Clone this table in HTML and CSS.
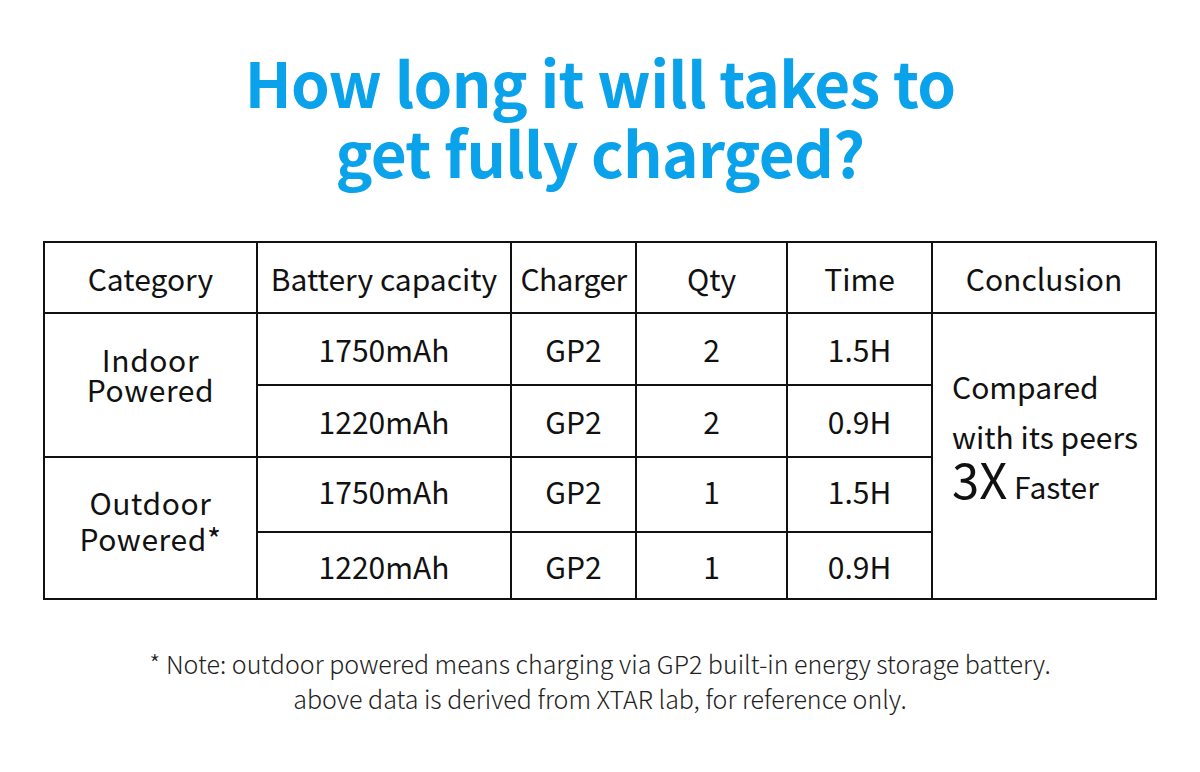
FILE: index.html
```html
<!DOCTYPE html>
<html>
<head>
<meta charset="utf-8">
<link rel="stylesheet" href="styles.css">
</head>
<body>
<div class="page">
  <h1 class="title">How long it will takes to<br>get fully charged?</h1>
  <table class="spec">
    <colgroup>
      <col class="c1"><col class="c2"><col class="c3"><col class="c4"><col class="c5"><col class="c6">
    </colgroup>
    <thead>
      <tr class="head"><th>Category</th><th>Battery capacity</th><th class="narrow">Charger</th><th>Qty</th><th>Time</th><th>Conclusion</th></tr>
    </thead>
    <tbody>
      <tr class="r1"><td rowspan="2" class="cat cat-in">Indoor<br>Powered</td><td>1750mAh</td><td>GP2</td><td>2</td><td>1.5H</td>
        <td rowspan="4" class="concl"><div class="concl-text">Compared<br>with its peers<br><span class="big">3X</span> Faster</div></td></tr>
      <tr class="r2"><td>1220mAh</td><td>GP2</td><td>2</td><td>0.9H</td></tr>
      <tr class="r3"><td rowspan="2" class="cat cat-out">Outdoor<br>Powered*</td><td class="lift">1750mAh</td><td class="lift">GP2</td><td class="lift">1</td><td class="lift">1.5H</td></tr>
      <tr class="r4"><td>1220mAh</td><td>GP2</td><td>1</td><td>0.9H</td></tr>
    </tbody>
  </table>
  <p class="note">* Note: outdoor powered means charging via GP2 built-in energy storage battery.<br>above data is derived from XTAR lab, for reference only.</p>
</div>
</body>
</html>
```

FILE: styles.css
```css
html, body {
  margin: 0;
  padding: 0;
  background: #ffffff;
}
body {
  font-family: "Noto Sans CJK SC", "Noto Sans", sans-serif;
  color: #111;
}
.page {
  width: 1200px;
  height: 772px;
  display: flex;
  flex-direction: column;
  align-items: center;
  overflow: hidden;
}
.title {
  margin: 46px 0 0 0;
  font-size: 62px;
  line-height: 70px;
  font-weight: 700;
  color: #0aa2ea;
  text-align: center;
  letter-spacing: -0.7px;
}
.spec {
  margin-top: 55px;
  width: 1112px;
  border-collapse: collapse;
  table-layout: fixed;
  border: 2px solid #111;
}
.c1 { width: 213px; }
.c2 { width: 254px; }
.c3 { width: 125px; }
.c4 { width: 151px; }
.c5 { width: 145px; }
.c6 { width: 224px; }
.spec th, .spec td {
  border: 2px solid #111;
  text-align: center;
  vertical-align: middle;
  font-size: 30px;
  font-weight: 400;
  padding: 0;
  color: #111;
  white-space: nowrap;
}
.spec th.narrow {
  letter-spacing: -0.6px;
}
.head { height: 71px; }
.r1, .r2 { height: 72px; }
.r3 { height: 75px; }
.r4 { height: 67px; }
.spec td.lift {
  padding-bottom: 8px;
}
.spec td.cat {
  line-height: 30px;
  letter-spacing: 0.6px;
}
.spec td.cat-in { padding-bottom: 22px; }
.spec td.cat-out { line-height: 36px; padding-bottom: 16px; }
.spec td.concl {
  text-align: left;
  padding-left: 19px;
}
.concl-text {
  line-height: 50px;
  padding-bottom: 41px;
}
.big {
  font-size: 49px;
  line-height: 0;
}
.note {
  margin: 46px 0 0 0;
  font-size: 25px;
  line-height: 35px;
  font-weight: 300;
  color: #222;
  text-align: center;
  letter-spacing: 0;
}
```
